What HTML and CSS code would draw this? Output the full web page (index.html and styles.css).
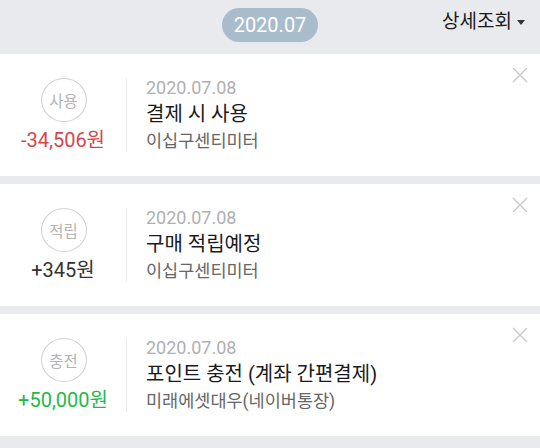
FILE: index.html
```html
<!DOCTYPE html>
<html lang="ko">
<head>
<meta charset="utf-8">
<link rel="stylesheet" href="styles.css">
</head>
<body>
<div class="page">
  <header class="top">
    <span class="month">2020.07</span>
    <span class="detail">상세조회<span class="caret"></span></span>
  </header>
  <div class="list">
    <div class="card">
      <div class="left">
        <div class="badge">사용</div>
        <div class="amount minus">-34,506원</div>
      </div>
      <div class="info">
        <div class="date">2020.07.08</div>
        <div class="title">결제 시 사용</div>
        <div class="sub">이십구센티미터</div>
      </div>
      <svg class="close" width="16" height="16" viewBox="0 0 16 16"><path d="M1 1L15 15M15 1L1 15" stroke="#c8c8c8" stroke-width="1.3" fill="none"/></svg>
    </div>
    <div class="card">
      <div class="left">
        <div class="badge">적립</div>
        <div class="amount plain">+345원</div>
      </div>
      <div class="info">
        <div class="date">2020.07.08</div>
        <div class="title">구매 적립예정</div>
        <div class="sub">이십구센티미터</div>
      </div>
      <svg class="close" width="16" height="16" viewBox="0 0 16 16"><path d="M1 1L15 15M15 1L1 15" stroke="#c8c8c8" stroke-width="1.3" fill="none"/></svg>
    </div>
    <div class="card">
      <div class="left">
        <div class="badge">충전</div>
        <div class="amount plus">+50,000원</div>
      </div>
      <div class="info">
        <div class="date">2020.07.08</div>
        <div class="title">포인트 충전 (계좌 간편결제)</div>
        <div class="sub">미래에셋대우(네이버통장)</div>
      </div>
      <svg class="close" width="16" height="16" viewBox="0 0 16 16"><path d="M1 1L15 15M15 1L1 15" stroke="#c8c8c8" stroke-width="1.3" fill="none"/></svg>
    </div>
  </div>
</div>
</body>
</html>
```
FILE: styles.css
```css
* { box-sizing: border-box; }
html, body { margin: 0; padding: 0; }
body {
  background: #e9eaee;
  font-family: Roboto, "Noto Sans CJK KR", sans-serif;
  width: 540px;
  height: 448px;
  overflow: hidden;
}
.top {
  height: 54px;
  position: relative;
  display: flex;
  justify-content: center;
  align-items: flex-start;
}
.month {
  margin-top: 8px;
  width: 96px;
  height: 34px;
  border-radius: 17px;
  background: #a9bccb;
  color: #fff;
  font-size: 20px;
  line-height: 34px;
  text-align: center;
}
.detail {
  position: absolute;
  right: 15px;
  top: 8px;
  font-size: 19px;
  line-height: 28px;
  color: #1a1a1a;
  display: flex;
  align-items: center;
}
.caret {
  width: 0; height: 0;
  border-left: 4px solid transparent;
  border-right: 4px solid transparent;
  border-top: 5px solid #333;
  margin-left: 5px;
  margin-top: 1px;
}
.list { display: flex; flex-direction: column; gap: 8px; }
.card {
  background: #fff;
  height: 122px;
  display: flex;
  align-items: flex-start;
  padding-top: 24px;
  position: relative;
}
.left {
  width: 127px;
  display: flex;
  flex-direction: column;
  align-items: center;
  border-right: 1px solid #ececec;
  height: 74px;
}
.badge {
  width: 46px;
  height: 46px;
  border-radius: 50%;
  border: 1.5px solid #d0d0d0;
  color: #b3b3b3;
  font-size: 15.5px;
  display: flex;
  align-items: center;
  justify-content: center;
  margin-left: 1px;
}
.amount {
  font-size: 20px;
  line-height: 24px;
  margin-top: 6px;
}
.minus { color: #d7454a; }
.plain { color: #333; }
.plus { color: #1fba45; }
.info {
  padding-left: 19px;
}
.date {
  font-size: 18px;
  line-height: 20px;
  color: #b0b0b0;
}
.title {
  font-size: 20px;
  line-height: 26px;
  margin-top: 3px;
  color: #1a1a1a;
}
.sub {
  font-size: 17.5px;
  line-height: 24px;
  margin-top: 2px;
  color: #666;
}
.close {
  position: absolute;
  right: 12px;
  top: 13px;
}
```
